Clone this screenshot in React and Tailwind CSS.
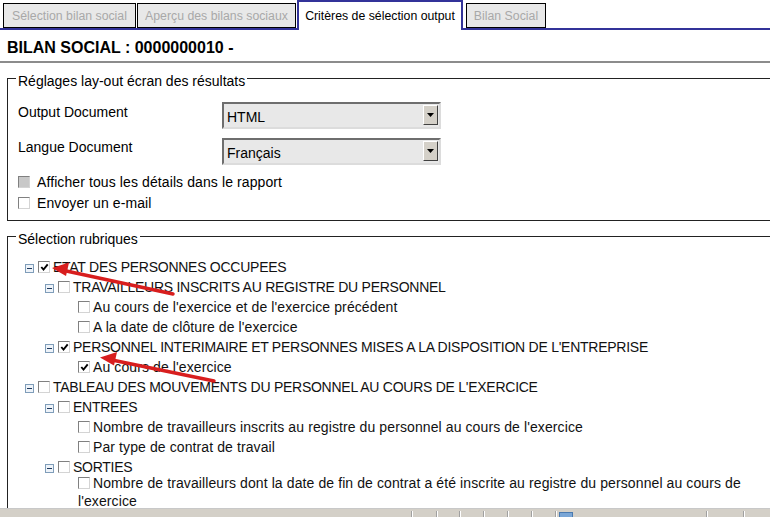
import React from "react";

const FONT = "font-['Liberation_Sans',Arial,sans-serif]";

function CheckBox({ checked = false, disabled = false }) {
  return (
    <span
      className={`inline-flex shrink-0 items-center justify-center w-[12px] h-[12px] border border-t-[#808080] border-l-[#808080] border-b-[#d4d4d4] border-r-[#d4d4d4] ${
        disabled ? "bg-[#c8c8c8]" : "bg-white"
      }`}
    >
      {checked && (
        <svg width="9" height="9" viewBox="0 0 9 9">
          <path d="M1.3 4 L3.5 6.6 L7.7 1.4" fill="none" stroke="#000" strokeWidth="1.9" />
        </svg>
      )}
    </span>
  );
}

function Expander() {
  return (
    <span className="inline-flex shrink-0 items-center justify-center w-[9px] h-[9px] mt-[3px] border border-[#7f9db9] bg-[#eef3f9]">
      <span className="block w-[5px] h-[1px] bg-[#1e395b]" />
    </span>
  );
}

function Select({ value }) {
  return (
    <div className="w-[219px] h-[27px] flex items-start justify-between bg-[#e8e8e8] border-2 border-t-[#6e6e6e] border-l-[#6e6e6e] border-b-[#dcdcdc] border-r-[#dcdcdc]">
      <span className="pl-[3px] pt-[5px] leading-[16px] text-[14px] text-black">{value}</span>
      <span className="mt-[1px] mr-[1px] w-[15px] h-[20px] flex items-center justify-center bg-[#d4d0c8] border border-t-white border-l-white border-b-[#404040] border-r-[#404040]">
        <svg width="7" height="4" viewBox="0 0 7 4">
          <path d="M0 0 H7 L3.5 4 Z" fill="#000" />
        </svg>
      </span>
    </div>
  );
}

function Row({ level, expander, checked, text, caps }) {
  const pl = { 0: "pl-[17px]", 1: "pl-[37px]", 2: "pl-[57px]" }[level];
  return (
    <div className={`flex items-center h-[20px] ${pl}`}>
      <span className="w-[13px] shrink-0 flex">{expander && <Expander />}</span>
      <CheckBox checked={checked} />
      <span
        className={`ml-[3px] whitespace-nowrap leading-[16px] text-[14px] text-[#111] ${
          caps ? "tracking-[-0.26px]" : "tracking-[0.1px]"
        }`}
      >
        {text}
      </span>
    </div>
  );
}

function Tab({ label, active, className }) {
  if (active) {
    return (
      <div
        className={`relative z-10 h-[30px] -mb-[2px] bg-white border-2 border-b-0 border-[#333399] flex items-center justify-center text-[12.3px] text-black ${className}`}
      >
        <span className="pt-[1px]">{label}</span>
      </div>
    );
  }
  return (
    <div
      className={`h-[25px] bg-[#e8e8e8] border border-black flex items-center justify-center text-[12.3px] text-[#a8a8a8] ${className}`}
    >
      <span className="pt-[1px]">{label}</span>
    </div>
  );
}

export default function App() {
  return (
    <div className={`relative w-[770px] h-[517px] overflow-hidden bg-white flex flex-col ${FONT}`}>
      <div className="flex-1 min-h-0 overflow-hidden">
        {/* Tabs */}
        <div className="h-[30px] flex items-end border-b-2 border-[#333399]">
          <Tab label="Sélection bilan social" className="ml-[3px] w-[133px]" />
          <Tab label="Aperçu des bilans sociaux" className="ml-[1px] w-[159px]" />
          <Tab label="Critères de sélection output" active className="ml-[1px] w-[166px]" />
          <Tab label="Bilan Social" className="ml-[3px] w-[80px]" />
        </div>

        {/* Heading */}
        <div className="mt-[8px] pb-[4px] border-b-2 border-[#8c8c8c]">
          <h1 className="pl-[7px] text-[16px] leading-[19px] font-bold text-black">
            BILAN SOCIAL : 0000000010 -
          </h1>
        </div>

        {/* Fieldset 1 */}
        <fieldset className="mt-[5px] ml-[7px] w-[790px] border border-[#222] pl-[8px] pt-[13px] pb-[7px] text-[14px] text-black">
          <legend className="px-[2px] pt-[5px] leading-[16px] text-[14px]">Réglages lay-out écran des résultats</legend>
          <div className="flex items-start ml-[2px]">
            <span className="w-[204px] pt-[2px] leading-[16px]">Output Document</span>
            <Select value="HTML" />
          </div>
          <div className="flex items-start ml-[2px] mt-[9px]">
            <span className="w-[204px] pt-[1px] leading-[16px]">Langue Document</span>
            <Select value="Français" />
          </div>
          <div className="flex items-center ml-[2px] mt-[6px] h-[21px]">
            <CheckBox disabled />
            <span className="ml-[7px] leading-[16px] tracking-[0.1px]">Afficher tous les détails dans le rapport</span>
          </div>
          <div className="flex items-center ml-[2px] h-[21px]">
            <CheckBox />
            <span className="ml-[7px] leading-[16px] tracking-[0.1px]">Envoyer un e-mail</span>
          </div>
        </fieldset>

        {/* Fieldset 2 */}
        <fieldset className="mt-[5px] ml-[7px] w-[790px] border border-[#222] pl-0 pr-[10px] pt-[10px] pb-[10px] text-[14px] text-black">
          <legend className="ml-[8px] px-[2px] pt-[5px] leading-[16px] text-[14px]">Sélection rubriques</legend>
          <Row level={0} expander checked caps text="ETAT DES PERSONNES OCCUPEES" />
          <Row level={1} expander caps text="TRAVAILLEURS INSCRITS AU REGISTRE DU PERSONNEL" />
          <Row level={2} text="Au cours de l'exercice et de l'exercice précédent" />
          <Row level={2} text="A la date de clôture de l'exercice" />
          <Row level={1} expander checked caps text="PERSONNEL INTERIMAIRE ET PERSONNES MISES A LA DISPOSITION DE L'ENTREPRISE" />
          <Row level={2} checked text="Au cours de l'exercice" />
          <Row level={0} expander caps text="TABLEAU DES MOUVEMENTS DU PERSONNEL AU COURS DE L'EXERCICE" />
          <Row level={1} expander caps text="ENTREES" />
          <Row level={2} text="Nombre de travailleurs inscrits au registre du personnel au cours de l'exercice" />
          <Row level={2} text="Par type de contrat de travail" />
          <Row level={1} expander caps text="SORTIES" />
          <div className="pl-[70px] -mt-[2px] leading-[17px] text-[14px] text-[#111] tracking-[0.1px]">
            <span className="inline-block align-[-1px] mr-[3px]">
              <CheckBox />
            </span>
            Nombre de travailleurs dont la date de fin de contrat a été inscrite au registre du personnel au cours de l'exercice
          </div>
        </fieldset>
      </div>

      {/* IE status bar (partially visible) */}
      <div className="h-[9px] shrink-0 border-t border-[#c8c8c8] bg-[#d4d0c8] pt-[2px] flex overflow-hidden">
        <div className="w-[412px] h-[20px] border-r border-[#a0a0a0]" />
        <div className="w-[25px] h-[20px] border-x border-[#a0a0a0] border-l-white" />
        <div className="w-[23px] h-[20px] border-x border-[#a0a0a0] border-l-white" />
        <div className="w-[24px] h-[20px] border-x border-[#a0a0a0] border-l-white" />
        <div className="w-[24px] h-[20px] border-x border-[#a0a0a0] border-l-white" />
        <div className="w-[24px] h-[20px] border-x border-[#a0a0a0] border-l-white" />
        <div className="w-[24px] h-[20px] border-x border-[#a0a0a0] border-l-white" />
        <div className="w-[151px] h-[20px] border-x border-[#a0a0a0] border-l-white pl-[2px] pt-[1px]">
          <span className="block w-[14px] h-[12px] bg-[#7aa6d6] border border-[#4a7ab0]" />
        </div>
        <div className="w-[37px] h-[20px] border-x border-[#a0a0a0] border-l-white" />
        <div className="flex-1 h-[20px] border-l border-white" />
      </div>

      {/* Red annotation arrows */}
      <svg className="absolute inset-0 pointer-events-none" width="770" height="517" viewBox="0 0 770 517">
        <line x1="173" y1="294" x2="64" y2="270.5" stroke="#d81e1e" strokeWidth="3.5" strokeLinecap="round" />
        <polygon points="52,268 69,262.5 66,276" fill="#d81e1e" />
        <line x1="214" y1="381" x2="112" y2="360" stroke="#d81e1e" strokeWidth="3.5" strokeLinecap="round" />
        <polygon points="100,357.5 117,352 114,365.5" fill="#d81e1e" />
      </svg>
    </div>
  );
}
